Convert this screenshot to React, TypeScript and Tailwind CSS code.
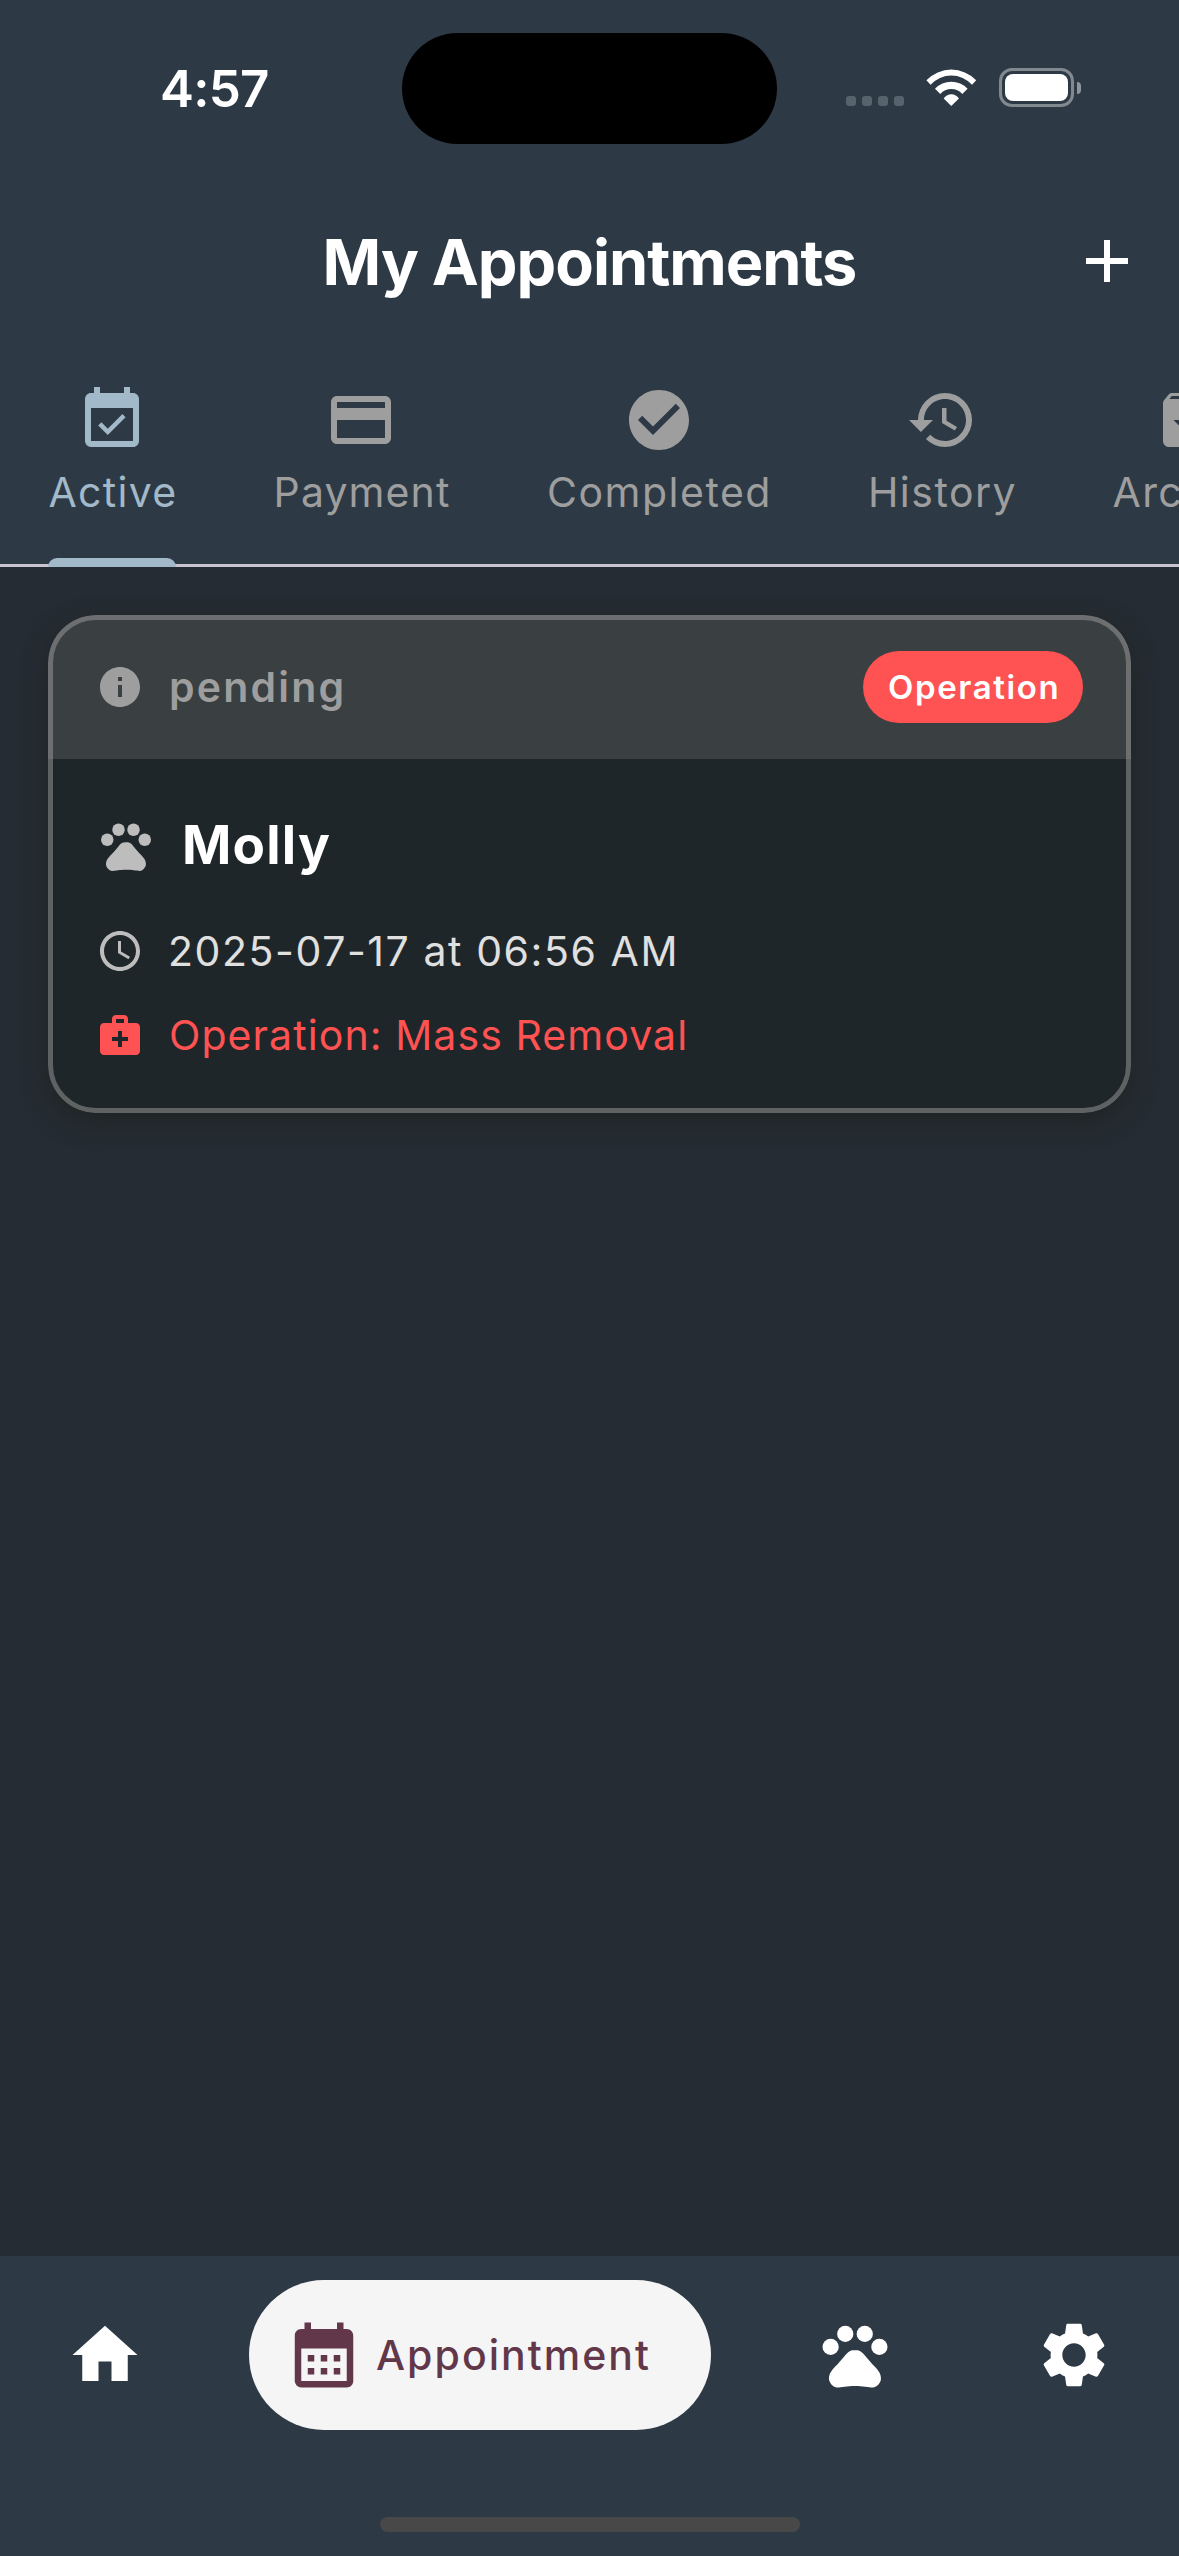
import type { ReactNode } from "react";
import type { IconType } from "react-icons";
import {
  MdAccessTime,
  MdAdd,
  MdArchive,
  MdCalendarMonth,
  MdCheckCircle,
  MdEventAvailable,
  MdHistory,
  MdHome,
  MdInfo,
  MdMedicalServices,
  MdPayment,
  MdPets,
  MdSettings,
} from "react-icons/md";

type Tab = { label: string; icon: IconType; box: string; active?: boolean };

const tabs: Tab[] = [
  { label: "Active", icon: MdEventAvailable, box: "w-[128px] tracking-[1.3px]", active: true },
  { label: "Payment", icon: MdPayment, box: "w-[178px] tracking-[1.1px]" },
  { label: "Completed", icon: MdCheckCircle, box: "w-[225px] tracking-[1.5px]" },
  { label: "History", icon: MdHistory, box: "w-[149px] tracking-[1.5px]" },
  { label: "Archive", icon: MdArchive, box: "w-[155px] tracking-[1.3px]" },
];

function WifiIcon() {
  return (
    <svg viewBox="0 0 51 39" className="h-[39px] w-[51px] fill-white">
      <path d="M.4 12.2A34.6 34.6 0 0 1 50.2 12.2L46 16.8A27.8 27.8 0 0 0 4.6 16.8Z" />
      <path d="M9 20.8A22.2 22.2 0 0 1 41.6 20.8L36.3 26A14.5 14.5 0 0 0 14.3 26Z" />
      <path d="M17.7 30.4A9.1 9.1 0 0 1 32.9 30.4L25.3 38Z" />
    </svg>
  );
}

function BatteryIcon() {
  return (
    <div className="flex h-[39px] items-center gap-[3px]">
      <div className="h-[39px] w-[75px] rounded-[13px] border-[3px] border-[#81898f] p-[3px]">
        <div className="h-full rounded-[8px] bg-white" />
      </div>
      <div className="h-[12px] w-[4px] rounded-r-full bg-[#8f969b]" />
    </div>
  );
}

function StatusBar() {
  return (
    <div className="flex h-[177px] items-center">
      <div className="w-[402px] pl-[160px] text-[51px] leading-[60px] font-semibold tracking-[-0.77px]">4:57</div>
      <div className="h-[111px] w-[375px] rounded-full bg-black" />
      <div className="mb-[2px] ml-[69px] flex h-[39px] items-end gap-[22px]">
        <div className="mb-px flex gap-[6px]">
          {[0, 1, 2, 3].map((dot) => (
            <div key={dot} className="size-[10px] rounded-[3px] bg-[#57636c]" />
          ))}
        </div>
        <WifiIcon />
        <BatteryIcon />
      </div>
    </div>
  );
}

function TitleBar() {
  return (
    <div className="grid h-[168px] grid-cols-[1fr_auto_1fr] items-center px-9">
      <span />
      <h1 className="mt-px text-[63px] leading-[76px] font-bold tracking-[-1px]">My Appointments</h1>
      <MdAdd className="size-[72px] justify-self-end" />
    </div>
  );
}

function TabBar() {
  return (
    <div className="relative h-[222px] overflow-hidden border-b-[3px] border-[#cac4d0]">
      <div className="flex h-[222px] gap-24 pl-12">
        {tabs.map(({ label, icon: Icon, box, active }) => (
          <div
            key={label}
            className={`flex shrink-0 flex-col items-center pt-[39px] ${box} ${active ? "text-[#a2b9c9]" : "text-[#9e9e9e]"}`}
          >
            <Icon className="size-[72px]" />
            <span className="mt-[6px] pl-[2px] text-[41px] leading-[60px] whitespace-nowrap">{label}</span>
          </div>
        ))}
      </div>
    </div>
  );
}

function DetailRow({ icon, children, className }: { icon: ReactNode; children: ReactNode; className: string }) {
  return (
    <div className={`flex h-12 items-center text-[41px] leading-[48px] whitespace-nowrap ${className}`}>
      {icon}
      {children}
    </div>
  );
}

function AppointmentCard() {
  return (
    <article className="relative h-[498px] overflow-hidden rounded-[48px] bg-[#1f2629]">
      <header className="flex h-36 items-center bg-[#3a3f42] px-12 text-[#9e9e9e]">
        <MdInfo className="size-12" />
        <span className="ml-[25px] text-[41px] leading-[48px] font-semibold tracking-[2.2px]">pending</span>
        <span className="ml-auto flex h-[72px] w-[220px] items-center rounded-full bg-[#ff5252] pl-[25px] text-[33px] leading-[40px] font-semibold tracking-[1.6px] text-white">
          Operation
        </span>
      </header>
      <div className="px-12 pt-[57px]">
        <div className="flex h-[60px] items-center">
          <MdPets className="size-[60px] text-[#bdbdbd]" />
          <span className="-mt-[2px] ml-[26px] text-[53px] leading-[60px] font-bold tracking-[1.2px] text-white">Molly</span>
        </div>
        <DetailRow
          className="mt-[51px] tracking-[1.57px] text-[#e0e0e0]"
          icon={<MdAccessTime className="mr-[24px] size-12 text-[#bdbdbd]" />}
        >
          2025-07-17 at 06:56 AM
        </DetailRow>
        <DetailRow
          className="mt-[36px] tracking-[1.08px] text-[#ff5252]"
          icon={<MdMedicalServices className="mr-[25px] size-12" />}
        >
          Operation: Mass Removal
        </DetailRow>
      </div>
      <div className="pointer-events-none absolute inset-0 rounded-[48px] border-[5px] border-[#9e9e9e]/50" />
    </article>
  );
}

function BottomNav() {
  return (
    <nav className="flex h-[300px] flex-col bg-[#2d3a45] pt-6">
      <div className="flex h-[150px] items-center justify-between px-[30px]">
        <div className="flex w-[150px] justify-center">
          <MdHome className="size-[78px]" />
        </div>
        <div className="flex h-[150px] w-[462px] items-center rounded-full bg-[#f5f5f5] pl-9 text-[#62374a]">
          <MdCalendarMonth className="size-[78px]" />
          <span className="ml-[13px] text-[41px] leading-[50px] font-medium tracking-[2.04px]">Appointment</span>
        </div>
        <div className="flex w-[150px] justify-center">
          <MdPets className="size-[78px]" />
        </div>
        <div className="flex w-[150px] justify-center">
          <MdSettings className="size-[78px]" />
        </div>
      </div>
      <div className="mx-auto mt-[87px] h-[15px] w-[420px] rounded-full bg-[#484848]" />
    </nav>
  );
}

export default function App() {
  return (
    <div className="flex h-[2556px] w-[1179px] flex-col overflow-hidden bg-[#252c33] font-[Inter,sans-serif] text-white">
      <header className="relative bg-[#2d3a45]">
        <StatusBar />
        <TitleBar />
        <TabBar />
        <div className="absolute bottom-0 left-12 h-[9px] w-[128px] rounded-t-[9px] bg-[#a2b9c9]" />
      </header>
      <main className="flex-1 px-12 pt-12">
        <div className="rounded-[48px] shadow-[0_9px_24px_rgba(31,36,34,0.9)]">
          <AppointmentCard />
        </div>
      </main>
      <BottomNav />
    </div>
  );
}
